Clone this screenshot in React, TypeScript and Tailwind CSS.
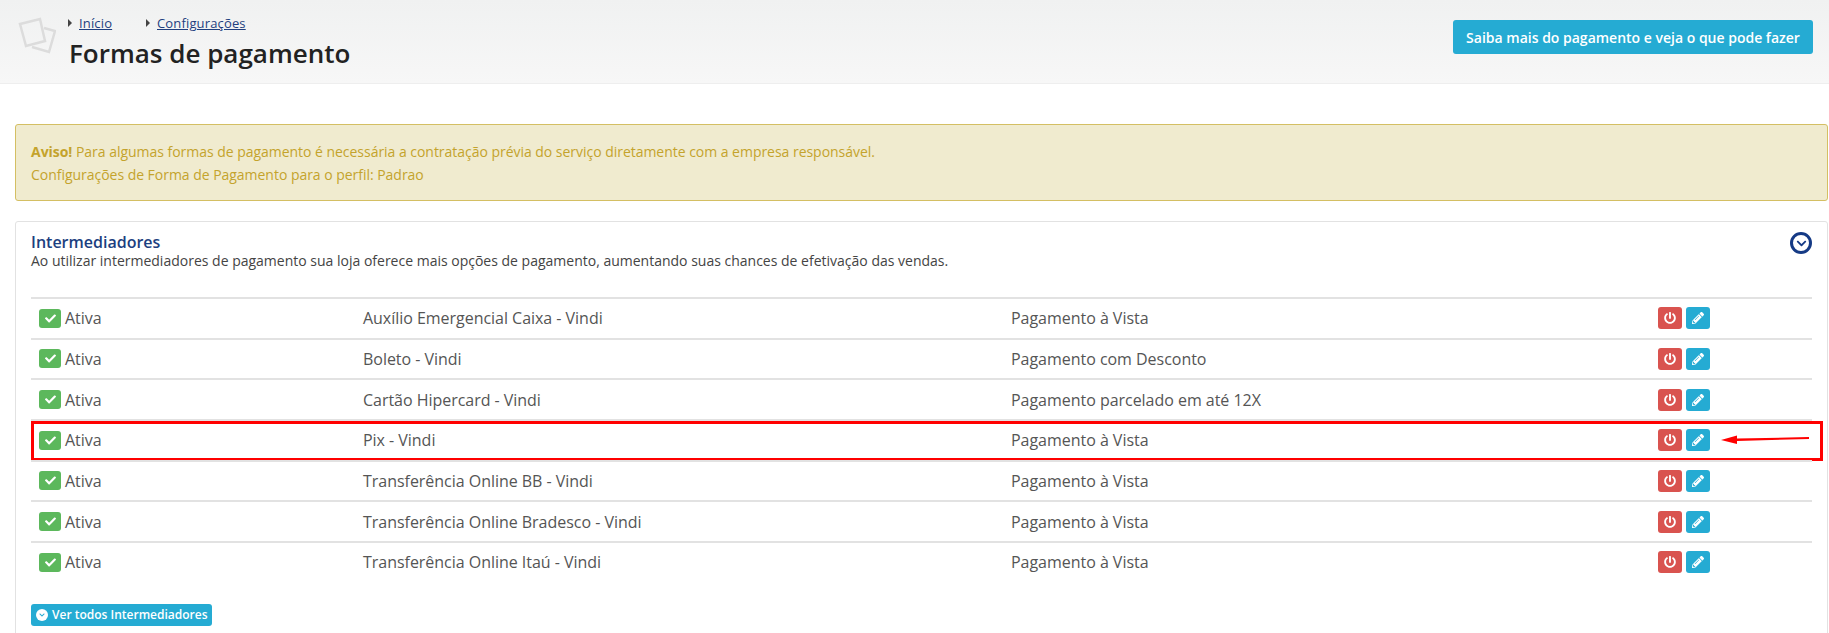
import { FaCheck, FaPowerOff, FaPencilAlt, FaChevronDown } from "react-icons/fa";

const ROWS = [
  { name: "Auxílio Emergencial Caixa - Vindi", desc: "Pagamento à Vista" },
  { name: "Boleto - Vindi", desc: "Pagamento com Desconto" },
  { name: "Cartão Hipercard - Vindi", desc: "Pagamento parcelado em até 12X" },
  { name: "Pix - Vindi", desc: "Pagamento à Vista", highlight: true },
  { name: "Transferência Online BB - Vindi", desc: "Pagamento à Vista" },
  { name: "Transferência Online Bradesco - Vindi", desc: "Pagamento à Vista" },
  { name: "Transferência Online Itaú - Vindi", desc: "Pagamento à Vista" },
];

function Crumb({ label }: { label: string }) {
  return (
    <span className="flex items-center gap-[7px] w-[78px]">
      <span className="w-0 h-0 border-y-[4px] border-y-transparent border-l-[4px] border-l-[#444]" />
      <a className="text-[#1f3f7f] underline">{label}</a>
    </span>
  );
}

function Row({ name, desc, highlight }: { name: string; desc: string; highlight?: boolean }) {
  return (
    <div className="relative grid grid-cols-[324px_648px_647px_162px] items-center h-[40.67px] border-t-2 border-[#e2e2e2] text-[16px] tracking-[-0.03px] text-[#555]">
      <div className="flex items-center gap-[4px] pl-[8px]">
        <span className="flex items-center justify-center w-[22px] h-[19px] rounded-[3px] bg-[#5cb85c] text-white">
          <FaCheck className="w-[11px] h-[11px]" />
        </span>
        Ativa
      </div>
      <div className="pl-[8px]">{name}</div>
      <div className="pl-[8px]">{desc}</div>
      <div className="flex gap-[4px] pl-[8px]">
        <button className="flex items-center justify-center w-[24px] h-[22px] rounded-[3px] bg-[#d9534f] text-white">
          <FaPowerOff className="w-[12px] h-[12px]" />
        </button>
        <button className="flex items-center justify-center w-[24px] h-[22px] rounded-[3px] bg-[#25abd3] text-white">
          <FaPencilAlt className="w-[12px] h-[12px]" />
        </button>
      </div>
      {highlight && (
        <>
          {/* marcação vermelha por cima da linha */}
          <div className="absolute left-0 top-0 w-[1792px] h-[40px] border-[3px] border-[#ff0000] pointer-events-none" />
          <svg className="absolute left-[1685px] top-[8px]" width="100" height="20" viewBox="0 0 100 20">
            <path d="M5 11 L21 6.5 L21 9.6 L93 8 L93 10 L21 12 L21 15 Z" fill="#ff0000" />
          </svg>
        </>
      )}
    </div>
  );
}

export default function App() {
  return (
    <div className="h-[633px] overflow-hidden bg-white font-['Open_Sans',sans-serif]">
      {/* Cabeçalho */}
      <header className="flex justify-between h-[84px] border-b border-[#eeeeee] bg-gradient-to-b from-[#f0f1f1] to-[#f7f7f7]">
        <div className="flex">
          <svg className="ml-[18px] mt-[17px]" width="38" height="38" viewBox="0 0 38 38" fill="none" stroke="#dcdcdc" strokeWidth="2.5">
            <path d="M14 30 L31 35 L37 14 L26 11" />
            <path d="M2 7 L22 2 L27 24 L8 29 Z" />
          </svg>
          <div className="ml-[13px] pt-[14px]">
            <nav className="flex text-[13px] leading-[18px] tracking-[0.15px] -ml-[1px]">
              <Crumb label="Início" />
              <Crumb label="Configurações" />
            </nav>
            <h1 className="mt-[3px] text-[26px] leading-[36px] font-semibold text-[#222]">Formas de pagamento</h1>
          </div>
        </div>
        <button className="mt-[20px] mr-[16px] w-[360px] h-[34px] rounded-[3px] bg-[#25abd3] text-white text-[14px] font-semibold">
          Saiba mais do pagamento e veja o que pode fazer
        </button>
      </header>

      <main className="pt-[40px] pl-[15px] pr-[1px]">
        {/* Aviso */}
        <div className="h-[77px] px-[15px] pt-[15px] rounded-[3px] border border-[#d4bf63] bg-[#f0ebcf] text-[14px] tracking-[-0.03px] leading-[23px] text-[#c4a32c]">
          <p><strong className="font-bold">Aviso!</strong> Para algumas formas de pagamento é necessária a contratação prévia do serviço diretamente com a empresa responsável.</p>
          <p>Configurações de Forma de Pagamento para o perfil: Padrao</p>
        </div>

        {/* Intermediadores */}
        <section className="relative mt-[20px] h-[500px] pt-[10px] px-[15px] rounded-[3px] border border-[#e2e2e2]">
          <h2 className="text-[16px] leading-[20px] font-semibold text-[#1c3f80]">Intermediadores</h2>
          <p className="text-[14px] leading-[18px] text-[#444]">
            Ao utilizar intermediadores de pagamento sua loja oferece mais opções de pagamento, aumentando suas chances de efetivação das vendas.
          </p>
          <span className="absolute right-[15px] top-[10px] flex items-center justify-center w-[22px] h-[22px] rounded-full border-[3px] border-[#153a85] text-[#153a85]">
            <FaChevronDown className="w-[11px] h-[11px]" />
          </span>
          <div className="mt-[27px]">
            {ROWS.map((r) => (
              <Row key={r.name} {...r} />
            ))}
          </div>
          <button className="flex items-center gap-[4px] mt-[22px] h-[22px] w-[181px] px-[5px] whitespace-nowrap rounded-[3px] bg-[#25abd3] text-white text-[12px] font-semibold">
            <span className="flex shrink-0 items-center justify-center w-[12px] h-[12px] rounded-full bg-white text-[#25abd3]">
              <FaChevronDown className="w-[6px] h-[6px]" />
            </span>
            Ver todos Intermediadores
          </button>
        </section>
      </main>
    </div>
  );
}
